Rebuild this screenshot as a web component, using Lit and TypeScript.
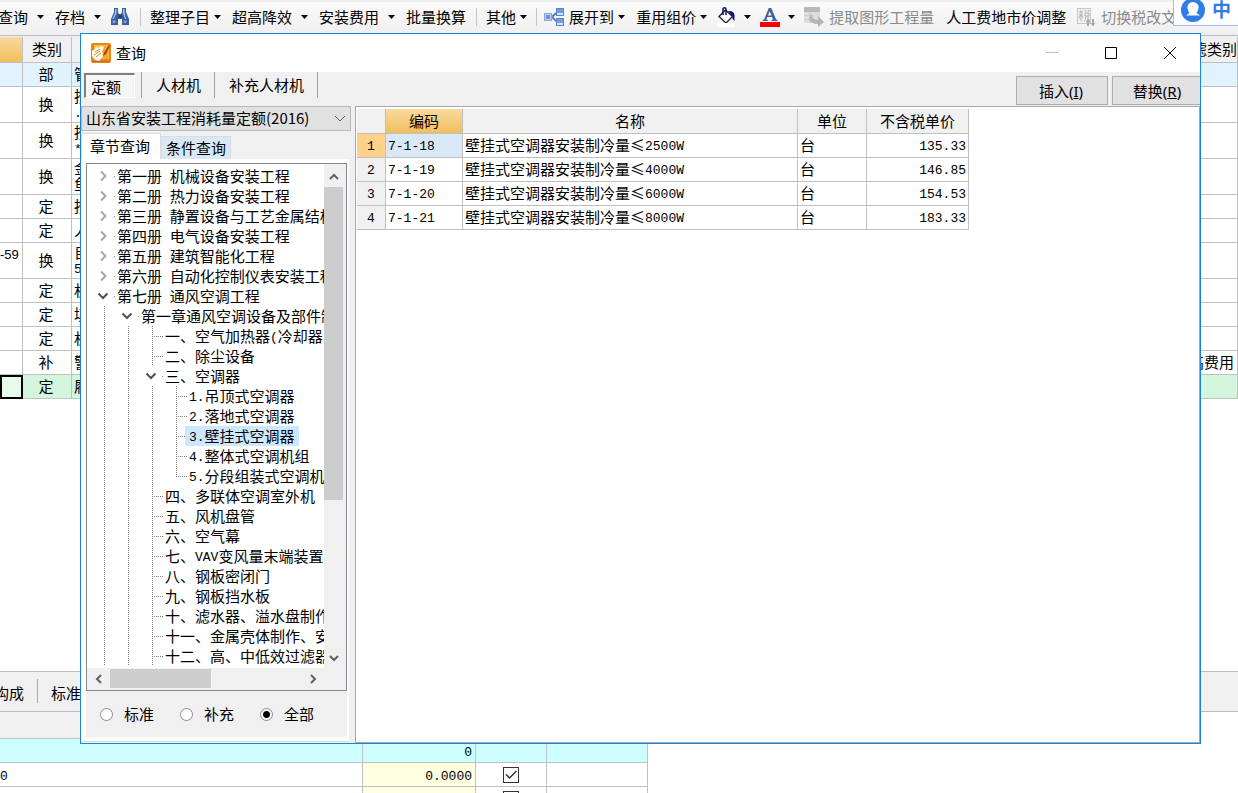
import { LitElement, html, svg, css, nothing } from "lit";
import { customElement, property, state } from "lit/decorators.js";
import { classMap } from "lit/directives/class-map.js";
import { styleMap } from "lit/directives/style-map.js";

/** Wraps runs of ASCII in a half-width monospaced span. */
const mixed = (text: string) =>
  text
    .split(/([ -~]+)/)
    .filter((part) => part !== "")
    .map((part) => (/^[ -~]/.test(part) ? html`<span class="half">${part}</span>` : part));

const shared = css`
  * {
    box-sizing: border-box;
  }
  button {
    font: inherit;
    color: inherit;
    background: none;
    border: 0;
    padding: 0;
    margin: 0;
    white-space: nowrap;
  }
  svg {
    display: block;
    flex: none;
  }
  .half {
    font-family: "Liberation Mono", monospace;
    font-size: 13px;
    line-height: 13px;
    vertical-align: 1px;
    white-space: pre;
  }
  table {
    border-collapse: separate;
    border-spacing: 0;
    table-layout: fixed;
  }
  th,
  td {
    font-weight: normal;
    padding: 0 2px;
    border-right: 1px solid #c0c0c0;
    border-bottom: 1px solid #c0c0c0;
    white-space: nowrap;
    overflow: hidden;
    text-align: left;
  }
  td {
    padding-bottom: 2px;
  }
`;

/* ---------- Toolbar ---------- */

type Tool = {
  label?: string;
  icon?: string;
  arrow?: "tight" | "wide" | "icon";
  disabled?: boolean;
  sep?: "normal" | "tight";
  gap?: boolean;
};

const TOOLS: Tool[] = [
  { label: "查询", arrow: "wide" },
  { label: "存档", arrow: "wide" },
  { icon: "find" },
  { sep: "normal" },
  { label: "整理子目", arrow: "tight" },
  { label: "超高降效", arrow: "wide" },
  { label: "安装费用", arrow: "wide" },
  { label: "批量换算" },
  { sep: "normal" },
  { label: "其他", arrow: "tight" },
  { sep: "tight" },
  { icon: "expand", label: "展开到", arrow: "tight" },
  { label: "重用组价", arrow: "tight" },
  { icon: "fill", arrow: "icon" },
  { icon: "font", arrow: "icon" },
  { icon: "extract", label: "提取图形工程量", disabled: true },
  { label: "人工费地市价调整", gap: true },
  { icon: "tax", label: "切换税改文件", disabled: true, gap: true },
];

const ICONS: Record<string, unknown> = {
  find: svg`
    <path d="M4 1h4v4l1 2h2l1-2V1h4v4l3 7v6h-7v-6H8v6H1v-6l3-7z" fill="#3a5f9e"/>
    <path d="M5 2h1.6v4L3.6 12H2.4L5 6zM13 2h1.6v4l1.6 6H15L13 6z" fill="#a9c3e8"/>
    <path d="M2.5 13.5h3V16h-3zM13.5 13.5h3V16h-3z" fill="#7fa3d8"/>
    <path d="M8 8h4v3H8z" fill="#23437c"/>`,
  expand: svg`
    <path d="M8 10l4-4M8 10l4 4" stroke="#5a7fc0" stroke-width="2" fill="none"/>
    <rect x=".5" y="6.500" width="7" height="7" fill="#b9d0f5" stroke="#8aa6d8"/>
    <rect x="2" y="8" width="4" height="4" fill="#6a94dc"/>
    <rect x="12.500" y="1.500" width="7" height="7" fill="#d6e5fb" stroke="#5e82c2"/>
    <rect x="13" y="2" width="6" height="4" fill="#6f9de8"/>
    <rect x="12.500" y="11.500" width="7" height="7" fill="#d6e5fb" stroke="#5e82c2"/>
    <rect x="13" y="12" width="6" height="4" fill="#6f9de8"/>`,
  fill: svg`
    <path d="M3 9.500l6.500-6.500 7 6.500-6.500 6.500z" fill="#fff" stroke="#222" stroke-width="1.300"/>
    <path d="M7 8V2.500Q7 .8 8.500.8T10 2.500V8" fill="none" stroke="#10106e" stroke-width="1.500"/>
    <path d="M12 4q6-.5 6.500 4v6q-2.500-1.500-2.500-5z" fill="#10107e"/>
    <rect x="1" y="16" width="18" height="4" fill="#fff"/>`,
  font: svg`
    <path d="M8.800 1h2.400l5 11.500 1.300.4V14h-6v-1.100l1.500-.4-1-2.600H7.300l-1 2.600 1.500.4V14h-5v-1.100l1.300-.4zM9.700 4.200L7.900 8.600h3.600z" fill="#41629c"/>
    <rect x="0" y="15" width="20" height="5" fill="#f00"/>`,
  extract: svg`
    <rect x="0" y="0" width="16" height="16" fill="#dedede"/>
    <rect x="0" y="0" width="16" height="5" fill="#b8b8b8"/>
    <path d="M0 8.500h9M0 12.500h7M5.500 5v11" stroke="#cccccc"/>
    <path d="M8 7q0 6 6 6v-4l6 6-6 5v-3q-8 0-9-6z" fill="#b4b4b4"/>`,
  tax: svg`
    <rect x="1.500" y="1.500" width="13" height="15" fill="#efefef" stroke="#c8c8c8"/>
    <path d="M3 5h4M5 3v11M3 8h4M3 11l2-3 2 3M9 3l1 2M13 3l-1 2M9 6h4v3H9zM10 9q0 4-2 5M12 9v4h2" stroke="#b4b4b4" fill="none"/>
    <path d="M11 19v-4H9.500L12 11.500l2.500 3.500H13v4zM16 12h2v4h1.500L17 19.500 14.500 16H16z" fill="#a8a8a8"/>`,
};

@customElement("tool-bar")
class ToolBar extends LitElement {
  static styles = [
    shared,
    css`
      :host {
        display: flex;
        align-items: center;
        height: 36px;
        padding-bottom: 2px;
        overflow: hidden;
        background: linear-gradient(#eee 0 2px, #fbfbfb 2px, #efefef 34px);
        border-bottom: 1px solid #b9bcc4;
      }
      .tools {
        display: flex;
        align-items: center;
        margin-left: -4px;
      }
      .tool {
        display: flex;
        align-items: center;
        flex: none;
        line-height: 20px;
      }
      .tool.gap {
        margin-left: 10px;
      }
      .tool:disabled {
        color: #8a8a8a;
      }
      .label {
        padding-left: 2px;
      }
      .icon + .label {
        padding-left: 5px;
      }
      .arrow {
        margin-right: 9px;
      }
      .arrow.tight {
        margin-left: 4px;
      }
      .arrow.wide {
        margin-left: 9px;
      }
      .arrow.icon-arrow {
        margin-left: 8px;
      }
      .sep {
        flex: none;
        width: 1px;
        height: 18px;
        margin: 0 7px 0 10px;
        background: #c4c4c4;
      }
      .sep.close {
        margin-left: 0;
      }
    `,
  ];

  render() {
    return html`<div class="tools" role="toolbar" aria-label="工具">
      ${TOOLS.map((t) =>
        t.sep
          ? html`<span class=${classMap({ sep: true, close: t.sep === "tight" })}></span>`
          : html`<button class=${classMap({ tool: true, gap: !!t.gap })} ?disabled=${!!t.disabled} aria-label=${t.label ?? t.icon}>
              ${t.icon ? html`<svg class="icon" width="20" height="20" viewBox="0 0 20 20">${ICONS[t.icon]}</svg>` : nothing}
              ${t.label ? html`<span class="label">${t.label}</span>` : nothing}
              ${t.arrow
                ? html`<svg class="arrow ${t.arrow === "icon" ? "icon-arrow" : t.arrow}" width="7" height="4" viewBox="0 0 7 4">
                    <path d="M0 0h7L3.500 4z" fill="#000" />
                  </svg>`
                : nothing}
            </button>`
      )}
    </div>`;
  }
}

/* ---------- Chapter tree ---------- */

type Guide = "line" | "tee" | "end" | "open" | "closed";
type Node = { text: string; guides: Guide[]; selected?: boolean };

const closed = (text: string): Node => ({ text, guides: ["closed"] });
const section = (text: string): Node => ({ text, guides: ["line", "line", "tee"] });
const item = (text: string, last = false, selected = false): Node => ({
  text,
  guides: ["line", "line", "line", last ? "end" : "tee"],
  selected,
});

const NODES: Node[] = [
  closed("第一册 机械设备安装工程"),
  closed("第二册 热力设备安装工程"),
  closed("第三册 静置设备与工艺金属结构制作安装工程"),
  closed("第四册 电气设备安装工程"),
  closed("第五册 建筑智能化工程"),
  closed("第六册 自动化控制仪表安装工程"),
  { text: "第七册 通风空调工程", guides: ["open"] },
  { text: "第一章通风空调设备及部件制作安装", guides: ["line", "open"] },
  section("一、空气加热器(冷却器)"),
  section("二、除尘设备"),
  { text: "三、空调器", guides: ["line", "line", "open"] },
  item("1.吊顶式空调器"),
  item("2.落地式空调器"),
  item("3.壁挂式空调器", false, true),
  item("4.整体式空调机组"),
  item("5.分段组装式空调机组", true),
  section("四、多联体空调室外机"),
  section("五、风机盘管"),
  section("六、空气幕"),
  section("七、VAV变风量末端装置"),
  section("八、钢板密闭门"),
  section("九、钢板挡水板"),
  section("十、滤水器、溢水盘制作"),
  section("十一、金属壳体制作、安装"),
  section("十二、高、中低效过滤器"),
];

const GUIDES: Record<Guide, unknown> = {
  line: svg`<path d="M12.500 0v20" class="dots"/>`,
  tee: svg`<path d="M12.500 0v20M14 10.500h10" class="dots"/>`,
  end: svg`<path d="M12.500 0v11M14 10.500h10" class="dots"/>`,
  open: svg`<path d="M6.500 7.500l4.500 4.500 4.500-4.500" class="chev open"/><path d="M22 10.500h1" class="dots"/>`,
  closed: svg`<path d="M9 5.500l4.500 4.500-4.500 4.500" class="chev"/><path d="M22 10.500h1" class="dots"/>`,
};

@customElement("chapter-tree")
class ChapterTree extends LitElement {
  @property({ type: Number }) vertical = 68;
  @property({ type: Number }) horizontal = 53;

  static styles = [
    shared,
    css`
      :host {
        display: grid;
        grid-template-columns: minmax(0, 1fr) 22px;
        grid-template-rows: minmax(0, 1fr) 22px;
        border: 1px solid #828790;
        background: #fff;
        min-height: 0;
      }
      .view {
        overflow: hidden;
        padding: 2px 0 0 5px;
      }
      .row {
        display: flex;
        height: 20px;
        line-height: 20px;
        white-space: nowrap;
      }
      .text {
        flex: none;
        margin-left: -3px;
        padding: 0 4px;
      }
      .text.selected {
        background: #cce8ff;
      }
      .dots {
        fill: none;
        stroke: #808080;
        stroke-dasharray: 1 1;
      }
      .chev {
        fill: none;
        stroke: #a6a6a6;
        stroke-width: 2;
      }
      .chev.open {
        stroke: #505050;
      }
      .bar {
        display: flex;
        background: #f0f0f0;
      }
      .bar.v {
        flex-direction: column;
        padding: 2px 3px 0 0;
      }
      .bar.h {
        padding: 1px 0 2px;
      }
      .corner {
        background: #f0f0f0;
      }
      .step {
        flex: none;
        width: 21px;
        height: 21px;
        display: grid;
        place-items: center;
      }
      .v .step {
        width: 19px;
      }
      .h .step {
        height: 19px;
        width: 23px;
      }
      .track {
        flex: 1;
        min-width: 0;
        min-height: 0;
      }
      .thumb {
        background: #cdcdcd;
        width: 100%;
        height: 100%;
      }
      .step path {
        fill: none;
        stroke: #606060;
        stroke-width: 2;
      }
    `,
  ];

  private step(label: string, d: string) {
    return html`<button class="step" aria-label=${label}>
      <svg width="12" height="12" viewBox="0 0 12 12"><path d=${d} /></svg>
    </button>`;
  }

  render() {
    return html`
      <div class="view" role="tree">
        ${NODES.map(
          (n) => html`<div class="row" role="treeitem" aria-selected=${n.selected ? "true" : "false"}>
            ${n.guides.map((g) => html`<svg width="24" height="20" viewBox="0 0 24 20">${GUIDES[g]}</svg>`)}
            <span class=${classMap({ text: true, selected: !!n.selected })}>${mixed(n.text)}</span>
          </div>`
        )}
      </div>
      <div class="bar v">
        ${this.step("向上", "M2 8l4-4 4 4")}
        <div class="track"><div class="thumb" style=${styleMap({ height: `${this.vertical}%` })}></div></div>
        ${this.step("向下", "M2 4l4 4 4-4")}
      </div>
      <div class="bar h">
        ${this.step("向左", "M8 2L4 6l4 4")}
        <div class="track"><div class="thumb" style=${styleMap({ width: `${this.horizontal}%` })}></div></div>
        ${this.step("向右", "M4 2l4 4-4 4")}
      </div>
      <div class="corner"></div>
    `;
  }
}

/* ---------- Query window ---------- */

const QUOTAS = [
  ["7-1-18", "壁挂式空调器安装制冷量≤2500W", "台", "135.33"],
  ["7-1-19", "壁挂式空调器安装制冷量≤4000W", "台", "146.85"],
  ["7-1-20", "壁挂式空调器安装制冷量≤6000W", "台", "154.53"],
  ["7-1-21", "壁挂式空调器安装制冷量≤8000W", "台", "183.33"],
];

@customElement("query-window")
class QueryWindow extends LitElement {
  @state() private scope = "全部";

  static styles = [
    shared,
    css`
      :host {
        display: flex;
        flex-direction: column;
        background: #f0f0f0;
        border: 1px solid #1883d7;
        overflow: hidden;
      }
      .title {
        display: flex;
        align-items: center;
        height: 38px;
        flex: none;
        padding: 0 23px 0 10px;
        background: #fff;
      }
      .name {
        margin: 0 auto 0 5px;
        font-size: 15px;
        font-weight: normal;
        line-height: 20px;
      }
      .sys {
        display: grid;
        place-items: center;
        width: 14px;
        height: 14px;
        margin-left: 45px;
      }
      .strip {
        display: flex;
        align-items: flex-start;
        height: 34px;
        flex: none;
        padding-left: 3px;
        overflow: hidden;
      }
      .kind {
        height: 26px;
        line-height: 26px;
        padding: 0 13px;
        border-right: 1px solid #a0a0a0;
      }
      .kind + .kind {
        margin-right: 1px;
      }
      .kind:first-child {
        height: 25px;
        width: 51px;
        line-height: 21px;
        margin: 1px 6px 0 0;
        padding: 0 5px;
        text-align: left;
        background: #f5f5f5;
        border: 1px solid #fff;
        border-top: 2px solid #808080;
        border-left: 2px solid #808080;
      }
      .kind:nth-child(2) {
        border-left: 1px solid #a0a0a0;
        padding-left: 14px;
      }
      .actions {
        display: flex;
        gap: 4px;
        margin: 4px -4px 0 auto;
      }
      .action {
        height: 29px;
        width: 92px;
        padding-right: 2px;
        background: #e1e1e1;
        border: 1px solid #adadad;
      }
      .latin {
        font-family: "Noto Sans", sans-serif;
      }
      .body {
        flex: 1;
        min-height: 0;
        display: grid;
        grid-template-columns: 270px minmax(0, 1fr);
        gap: 4px;
      }
      .side {
        display: flex;
        flex-direction: column;
        min-height: 0;
      }
      .combo {
        position: relative;
        display: flex;
        align-items: center;
      }
      select {
        appearance: none;
        width: 100%;
        height: 25px;
        padding: 0 24px 2px 4px;
        font: inherit;
        line-height: 20px;
        color: #000;
        background: #e1e1e1;
        border: 1px solid #b8b8b8;
        border-radius: 0;
      }
      .combo svg {
        position: absolute;
        right: 5px;
        pointer-events: none;
      }
      .tabs {
        display: flex;
        align-items: flex-end;
        height: 28px;
        flex: none;
      }
      .tab {
        width: 70px;
        height: 23px;
        line-height: 20px;
        background: #d8e8f6;
        border: 1px solid #dcdcdc;
        border-bottom: 0;
      }
      .tab.current {
        width: 80px;
        height: 26px;
        padding: 0 2px 2px 0;
        background: #fff;
      }
      .page {
        flex: 1;
        min-height: 0;
        display: flex;
        flex-direction: column;
        margin: 0 2px 1px 0;
        padding: 4px 2px 4px 5px;
        background: #fff;
        border-bottom: 1px solid #dcdcdc;
      }
      chapter-tree {
        flex: 1;
      }
      .scopes {
        display: flex;
        align-items: center;
        height: 46px;
        flex: none;
        margin: 0;
        padding-left: 14px;
        background: #f0f0f0;
      }
      .scope {
        display: flex;
        align-items: center;
        gap: 11px;
        width: 80px;
        line-height: 20px;
      }
      .scope input {
        appearance: none;
        flex: none;
        width: 13px;
        height: 13px;
        margin: 0;
        border: 1px solid #8c8c8c;
        border-radius: 50%;
        background: #fff;
      }
      .scope input:checked {
        background: radial-gradient(#000 0 3px, #fff 4px);
      }
      .result {
        background: #fff;
        border: 1px solid #a5a8ae;
        padding: 2px 1px;
        min-height: 0;
        overflow: hidden;
      }
      .quotas {
        width: 612px;
      }
      th {
        height: 25px;
        background: #f0f0f0;
        text-align: center;
      }
      .rowhead {
        height: 24px;
        padding-bottom: 2px;
      }
      td {
        height: 24px;
      }
      .hot {
        background: linear-gradient(#f9d99f, #f2be5c);
      }
      tr.active .rowhead {
        background: #ffd28c;
      }
      tr.active .code {
        background: #d8e8f7;
      }
      .num {
        text-align: right;
      }
    `,
  ];

  render() {
    return html`
      <header class="title">
        <svg width="20" height="20" viewBox="0 0 20 20">
          <rect width="20" height="20" rx="2" fill="#e8851a" />
          <path d="M3 2h15v14H3z" fill="#f9c23c" />
          <path d="M12 3h5v13h-5z" fill="#f6a922" />
          <path d="M1 8l3-2 1-2 2 1 3-2 3 1-2 4 1 5-4 5-4-1-3-4z" fill="#fffaf0" />
          <path d="M4 9l5-3M3 12l6-4M5 14l5-4" stroke="#d88a3a" fill="none" />
          <path d="M18 2l-5 8-1 3 3-2 4-8z" fill="#b5341c" />
          <path d="M1 18.500h18" stroke="#d0601a" />
        </svg>
        <h1 class="name">查询</h1>
        <button class="sys" aria-label="最小化">
          <svg width="12" height="12" viewBox="0 0 12 12"><path d="M0 5.500h12" stroke="#c0c0c0" /></svg>
        </button>
        <button class="sys" aria-label="最大化">
          <svg width="12" height="12" viewBox="0 0 12 12"><path d="M.5.5h11v11H.5z" fill="none" stroke="#000" /></svg>
        </button>
        <button class="sys" aria-label="关闭">
          <svg width="12" height="12" viewBox="0 0 12 12"><path d="M0 0l12 12M12 0L0 12" stroke="#000" /></svg>
        </button>
      </header>
      <div class="strip">
        <button class="kind">定额</button>
        <button class="kind">人材机</button>
        <button class="kind">补充人材机</button>
        <div class="actions">
          <button class="action">插入<span class="latin">(<u>I</u>)</span></button>
          <button class="action">替换<span class="latin">(<u>R</u>)</span></button>
        </div>
      </div>
      <div class="body">
        <div class="side">
          <div class="combo">
            <select aria-label="定额库">
              <option>山东省安装工程消耗量定额(2016)</option>
            </select>
            <svg width="12" height="8" viewBox="0 0 12 8"><path d="M1 1l5 5 5-5" fill="none" stroke="#606060" /></svg>
          </div>
          <div class="tabs" role="tablist">
            <button class="tab current" role="tab" aria-selected="true">章节查询</button>
            <button class="tab" role="tab" aria-selected="false">条件查询</button>
          </div>
          <div class="page">
            <chapter-tree></chapter-tree>
            <div class="scopes" role="radiogroup" aria-label="范围">
              ${["标准", "补充", "全部"].map(
                (s) => html`<label class="scope">
                  <input type="radio" name="scope" .checked=${this.scope === s} @change=${() => (this.scope = s)} />${s}
                </label>`
              )}
            </div>
          </div>
        </div>
        <div class="result">
          <table class="quotas">
            <colgroup>
              <col width="29" />
              <col width="77" />
              <col width="335" />
              <col width="69" />
              <col width="102" />
            </colgroup>
            <thead>
              <tr>
                <th></th>
                <th class="hot">编码</th>
                <th>名称</th>
                <th>单位</th>
                <th>不含税单价</th>
              </tr>
            </thead>
            <tbody>
              ${QUOTAS.map(
                ([code, name, unit, price], i) => html`<tr class=${classMap({ active: i === 0 })}>
                  <th class="rowhead">${mixed(String(i + 1))}</th>
                  <td class="code">${mixed(code)}</td>
                  <td>${mixed(name)}</td>
                  <td>${unit}</td>
                  <td class="num">${mixed(price)}</td>
                </tr>`
              )}
            </tbody>
          </table>
        </div>
      </div>
    `;
  }
}

/* ---------- Main page ---------- */

type Line = { code?: string; kind: string; name: string[]; fee?: string; tone?: string };

const LINES: Line[] = [
  { kind: "部", name: ["管"], tone: "blue" },
  { kind: "换", name: ["按", "."] },
  { kind: "换", name: ["按", "*"] },
  { kind: "换", name: ["金", "鱼"] },
  { kind: "定", name: ["按"] },
  { kind: "定", name: ["人"] },
  { code: "-59", kind: "换", name: ["自", "5"] },
  { kind: "定", name: ["机"] },
  { kind: "定", name: ["填"] },
  { kind: "定", name: ["机"] },
  { kind: "补", name: ["警"], fee: "超高费用" },
  { kind: "定", name: ["履"], tone: "green" },
];

@customElement("app-root")
class AppRoot extends LitElement {
  static styles = [
    shared,
    css`
      :host {
        position: relative;
        display: grid;
        grid-template-columns: minmax(0, 1fr);
        grid-template-rows: auto minmax(0, 1fr) 122px;
        height: 100vh;
        overflow: hidden;
        background: #fff;
        color: #000;
        font-family: "Noto Sans CJK SC", sans-serif;
        font-size: 15px;
        line-height: 20px;
      }
      .work {
        overflow: hidden;
        border-top: 1px solid #eee;
      }
      .lines {
        width: 100%;
      }
      .lines th {
        height: 26px;
        padding-bottom: 2px;
        background: #f0f0f0;
        text-align: center;
      }
      .lines th.hot {
        background: linear-gradient(#f9d99f, #f2be5c);
      }
      .lines td {
        height: 24px;
      }
      .lines .double td {
        height: 36px;
      }
      .lines .kind {
        padding: 0 4px 2px 2px;
        text-align: center;
      }
      .lines .double .name {
        line-height: 16px;
      }
      .name div {
        overflow: hidden;
      }
      .lines .code {
        padding: 0 6px 12px 0;
        line-height: 20px;
        font-family: "Liberation Sans", sans-serif;
        font-size: 13px;
        text-align: right;
      }
      .lines th:last-child {
        padding-right: 0;
        text-align: right;
      }
      .lines td:last-child {
        padding-right: 3px;
        text-align: right;
      }
      .blue td {
        background: #e1f3ff;
      }
      .green td {
        background: #d3f5dc;
      }
      .green .code {
        padding: 0;
        border: 2px solid #000;
        background: #e6fbea;
      }
      .panel {
        overflow: hidden;
        border-top: 1px solid #b9bcc4;
      }
      .views {
        display: flex;
        align-items: center;
        height: 40px;
        padding-bottom: 1px;
        background: #f0f0f0;
        border-bottom: 1px solid #b9bcc4;
      }
      .view {
        padding: 4px 13px 0;
      }
      .view:first-child {
        margin-left: -19px;
        border-right: 1px solid #a8a8a8;
      }
      .detail {
        width: 648px;
      }
      .detail th {
        height: 27px;
        background: #f0f0f0;
      }
      .detail td {
        height: 24px;
        padding: 0 3px 0 0;
      }
      .detail .total td {
        background: #ccffff;
      }
      .num {
        text-align: right;
      }
      .detail .edit {
        background: #ffffe1;
      }
      .detail .check {
        padding: 0;
        text-align: center;
        line-height: 0;
      }
      .check input {
        appearance: none;
        width: 16px;
        height: 16px;
        margin: 1px 0 0;
        border: 1px solid #333;
        vertical-align: middle;
        background: #fff
          url("data:image/svg+xml,%3Csvg xmlns='http://www.w3.org/2000/svg' viewBox='0 0 14 14'%3E%3Cpath d='M2 6.500l3.500 3.500 7-7' fill='none' stroke='%23333' stroke-width='1.500'/%3E%3C/svg%3E");
      }
      .ime {
        position: absolute;
        top: 0;
        right: 0;
        display: flex;
        align-items: flex-start;
        gap: 7px;
        width: 65px;
        height: 26px;
        padding-left: 7px;
        background: #fff;
        border: 1px solid #9dbdf0;
        border-width: 0 0 1px 1px;
        color: #2f7de6;
        font-size: 19px;
        font-weight: 700;
        line-height: 18px;
        overflow: hidden;
      }
      query-window {
        position: absolute;
        top: 33px;
        right: 37px;
        bottom: 49px;
        left: 80px;
      }
    `,
  ];

  render() {
    return html`
      <tool-bar></tool-bar>
      <main class="work">
        <table class="lines">
          <colgroup>
            <col width="23" />
            <col width="49" />
            <col />
            <col width="140" />
          </colgroup>
          <thead>
            <tr>
              <th class="hot"></th>
              <th>类别</th>
              <th></th>
              <th>过滤类别</th>
            </tr>
          </thead>
          <tbody>
            ${LINES.map(
              (l) => html`<tr class="${l.tone ?? ""} ${l.name.length > 1 ? "double" : ""}">
                <td class="code">${l.code ?? nothing}</td>
                <td class="kind">${l.kind}</td>
                <td class="name">${l.name.map((n) => html`<div>${mixed(n)}</div>`)}</td>
                <td>${l.fee ?? nothing}</td>
              </tr>`
            )}
          </tbody>
        </table>
      </main>
      <section class="panel">
        <div class="views">
          <button class="view">构成</button>
          <button class="view">标准换算</button>
        </div>
        <table class="detail">
          <colgroup>
            <col width="363" />
            <col width="113" />
            <col width="71" />
            <col width="101" />
          </colgroup>
          <thead>
            <tr>
              <th></th>
              <th></th>
              <th></th>
              <th></th>
            </tr>
          </thead>
          <tbody>
            <tr class="total">
              <td></td>
              <td class="num">${mixed("0")}</td>
              <td></td>
              <td></td>
            </tr>
            ${[0, 1].map(
              () => html`<tr>
                <td>${mixed("0")}</td>
                <td class="num edit">${mixed("0.0000")}</td>
                <td class="check"><input type="checkbox" aria-label="计取" checked /></td>
                <td></td>
              </tr>`
            )}
          </tbody>
        </table>
      </section>
      <query-window></query-window>
      <div class="ime">
        <svg width="24" height="22" viewBox="0 2 24 22">
          <circle cx="12" cy="12" r="12" fill="#2f7de6" />
          <path d="M12 4a5.500 5.500 0 0 1 5 8q-.5 2-1.500 3l3.500 2.500H5L8.500 15Q7.500 14 7 12a5.500 5.500 0 0 1 5-8z" fill="#fff" />
        </svg>
        <span>中</span>
      </div>
    `;
  }
}
